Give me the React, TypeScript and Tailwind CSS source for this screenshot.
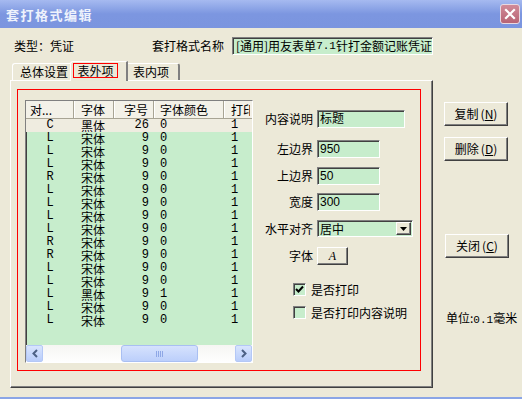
import { ReactNode } from 'react';

const rows: string[][] = [
  ['C', '黑体', '26', '0', '1'],
  ['L', '宋体', '9', '0', '1'],
  ['L', '宋体', '9', '0', '1'],
  ['L', '宋体', '9', '0', '1'],
  ['R', '宋体', '9', '0', '1'],
  ['L', '宋体', '9', '0', '1'],
  ['L', '宋体', '9', '0', '1'],
  ['L', '宋体', '9', '0', '1'],
  ['L', '宋体', '9', '0', '1'],
  ['R', '宋体', '9', '0', '1'],
  ['R', '宋体', '9', '0', '1'],
  ['L', '宋体', '9', '0', '1'],
  ['L', '宋体', '9', '0', '1'],
  ['L', '黑体', '9', '1', '1'],
  ['L', '宋体', '9', '0', '1'],
  ['L', '宋体', '9', '0', '1'],
];

const sunken =
  'border border-t-[#808080] border-l-[#808080] border-r-white border-b-white shadow-[inset_1px_1px_0_#404040]';
const raised =
  'border border-t-white border-l-white border-r-[#404040] border-b-[#404040] shadow-[inset_-1px_-1px_0_#808080]';

function Field({ label, width, value }: { label: string; width: string; value: string }) {
  return (
    <div className="flex items-center">
      <span className="w-[53px] text-right">{label}</span>
      <div
        className={`ml-[4px] h-[18px] ${width} ${sunken} bg-[#c7edcc] flex items-center pl-[2px] font-['Liberation_Sans','Noto_Sans_CJK_SC',sans-serif] text-[12px] leading-none`}
      >
        {value}
      </div>
    </div>
  );
}

function SideButton({ children, className = '' }: { children: ReactNode; className?: string }) {
  return (
    <div
      className={`w-[64px] h-[24px] ${raised} flex items-center justify-center ${className}`}
    >
      {children}
    </div>
  );
}

function Arrow({ dir }: { dir: 'left' | 'right' }) {
  return (
    <div className="w-[17px] h-[17px] rounded-[2px] border border-[#b4c8f6] bg-gradient-to-b from-[#d9e5fd] to-[#b9cdfb] flex items-center justify-center">
      <svg width="8" height="9" viewBox="0 0 8 9">
        <path
          d={dir === 'left' ? 'M6 1 L2.5 4.5 L6 8' : 'M2 1 L5.5 4.5 L2 8'}
          stroke="#4d6185"
          strokeWidth="2"
          fill="none"
        />
      </svg>
    </div>
  );
}

export default function App() {
  return (
    <div className="w-[522px] h-[399px] flex flex-col overflow-hidden bg-[#ece9d8] text-[12px] leading-none text-black font-['Noto_Sans_CJK_SC',sans-serif]">
      {/* title bar */}
      <div className="h-[28px] shrink-0 flex items-center justify-between pl-[6px] pr-[2px] bg-gradient-to-b from-[#a6baf0] via-[#7c96e0] to-[#7b95df]">
        <span className="text-[13px] font-bold text-[#eef2fc] tracking-[1.5px]">套打格式编辑</span>
        <div className="w-[20px] h-[20px] rounded-[3px] border border-[#e8d8e0] bg-gradient-to-b from-[#d08a98] to-[#b86474] flex items-center justify-center">
          <svg width="12" height="12" viewBox="0 0 12 12">
            <path d="M2 2 L10 10 M10 2 L2 10" stroke="white" strokeWidth="2.2" strokeLinecap="square" />
          </svg>
        </div>
      </div>

      {/* type / name row */}
      <div className="mt-[9px] h-[18px] flex items-center">
        <span className="ml-[14px] w-[138px]">类型：凭证</span>
        <span className="w-[80px]">套打格式名称</span>
        <div className={`w-[201px] h-[18px] ${sunken} bg-[#c7edcc] flex items-center pl-[3px] overflow-hidden whitespace-nowrap`}>
          [通用]用友表单<span className="font-['Liberation_Mono',monospace] text-[11px]">7.1</span>针打金额记账凭证
        </div>
      </div>

      {/* main area */}
      <div className="mt-[6px] flex">
        <div className="ml-[10px] w-[423px] flex flex-col">
          {/* tabs */}
          <div className="h-[19px] flex items-end pl-[2px]">
            <div className="h-[17px] w-[60px] border-t border-l border-t-white border-l-white border-r-2 border-r-[#808080] rounded-tl-[3px] flex items-center pl-[7px]">
              总体设置
            </div>
            <div className="relative z-10 -ml-[2px] -mb-[1px] h-[20px] w-[58px] bg-[#ece9d8] border-t border-l border-t-white border-l-white border-r-2 border-r-[#808080] rounded-tl-[3px] pt-[1px] pl-[2px]">
              <div className="w-[45px] h-[15px] border border-[#ff0000] flex items-center justify-center">
                表外项
              </div>
            </div>
            <div className="h-[17px] w-[52px] border-t border-t-white border-r-2 border-r-[#808080] rounded-tr-[3px] flex items-center pl-[5px]">
              表内项
            </div>
          </div>

          {/* panel */}
          <div className="h-[308px] border border-t-white border-l-white border-r-[#404040] border-b-[#404040] shadow-[inset_-1px_-1px_0_#808080] pl-[6px] pt-[8px]">
            <div className="w-[404px] h-[282px] border border-[#ff0000] flex items-start pl-[7px] pt-[10px]">
              {/* list view */}
              <div className={`w-[228px] h-[263px] ${sunken} bg-[#c7edcc] flex flex-col overflow-hidden`}>
                <div className="h-[18px] shrink-0 flex bg-[#f3f1e8] border-b border-b-[#a8a494] whitespace-nowrap overflow-hidden">
                  <div className="w-[48px] shrink-0 border-r border-r-[#a8a494] flex items-center pl-[4px]">对...</div>
                  <div className="w-[40px] shrink-0 border-r border-r-[#a8a494] border-l border-l-white flex items-center pl-[6px]">字体</div>
                  <div className="w-[40px] shrink-0 border-r border-r-[#a8a494] border-l border-l-white flex items-center justify-end pr-[5px]">字号</div>
                  <div className="w-[70px] shrink-0 border-r border-r-[#a8a494] border-l border-l-white flex items-center pl-[5px]">字体颜色</div>
                  <div className="w-[26px] shrink-0 border-l border-l-white flex items-center pl-[6px] overflow-hidden">打印</div>
                </div>
                <div className="flex-1 flex flex-col font-['Liberation_Mono','Noto_Sans_CJK_SC',monospace] text-[12px] leading-[13px]">
                  {rows.map((r, i) => (
                    <div
                      key={i}
                      className={`h-[13px] flex items-center whitespace-nowrap overflow-hidden ${i === 0 ? 'bg-[#efece0]' : ''}`}
                    >
                      <div className="w-[48px] shrink-0 text-center">{r[0]}</div>
                      <div className="w-[40px] shrink-0 pl-[7px] font-['Noto_Sans_CJK_SC',sans-serif] text-[12px] leading-[12px]">{r[1]}</div>
                      <div className="w-[40px] shrink-0 text-right pr-[5px]">{r[2]}</div>
                      <div className="w-[70px] shrink-0 pl-[6px]">{r[3]}</div>
                      <div className="w-[26px] shrink-0 pl-[7px]">{r[4]}</div>
                    </div>
                  ))}
                </div>
                {/* horizontal scrollbar */}
                <div className="h-[17px] shrink-0 flex items-center bg-gradient-to-b from-[#f6f6f3] to-[#fefefe]">
                  <Arrow dir="left" />
                  <div className="flex-1 relative h-[17px]">
                    <div className="absolute left-[78px] top-0 w-[77px] h-[17px] rounded-[3px] border border-[#a9bff2] bg-gradient-to-b from-[#d6e2fd] to-[#bccffb] flex items-center justify-center gap-[1px]">
                      {[0, 1, 2, 3].map((k) => (
                        <div key={k} className="w-[1px] h-[6px] bg-[#8ea7e6]" />
                      ))}
                    </div>
                  </div>
                  <Arrow dir="right" />
                </div>
              </div>

              {/* form */}
              <div className="ml-[7px] mt-[10px] flex flex-col">
                <Field label="内容说明" width="w-[88px]" value="标题" />
                <div className="mt-[12px]">
                  <Field label="左边界" width="w-[63px]" value="950" />
                </div>
                <div className="mt-[9px]">
                  <Field label="上边界" width="w-[63px]" value="50" />
                </div>
                <div className="mt-[8px]">
                  <Field label="宽度" width="w-[63px]" value="300" />
                </div>
                <div className="mt-[9px] flex items-center">
                  <span className="w-[53px] text-right">水平对齐</span>
                  <div className={`ml-[4px] h-[17px] w-[96px] ${sunken} bg-[#c7edcc] flex items-center`}>
                    <span className="flex-1 pl-[2px]">居中</span>
                    <div className={`w-[15px] h-[13px] ${raised} bg-[#ece9d8] flex items-center justify-center mr-[1px]`}>
                      <svg width="7" height="4" viewBox="0 0 7 4">
                        <path d="M0 0 H7 L3.5 4 Z" fill="black" />
                      </svg>
                    </div>
                  </div>
                </div>
                <div className="mt-[10px] flex items-center">
                  <span className="w-[53px] text-right">字体</span>
                  <div className={`ml-[4px] w-[31px] h-[18px] ${raised} flex items-center justify-center`}>
                    <span className="italic font-['Liberation_Serif',serif] text-[12px]">A</span>
                  </div>
                </div>
                <div className="mt-[18px] ml-[33px] flex items-center">
                  <div className={`w-[13px] h-[13px] ${sunken} bg-[#c7edcc] flex items-center justify-center`}>
                    <svg width="9" height="9" viewBox="0 0 9 9">
                      <path d="M1 4 L3.5 6.5 L8 1.5" stroke="black" strokeWidth="2" fill="none" />
                    </svg>
                  </div>
                  <span className="ml-[5px]">是否打印</span>
                </div>
                <div className="mt-[10px] ml-[33px] flex items-center">
                  <div className={`w-[13px] h-[13px] ${sunken} bg-[#c7edcc]`} />
                  <span className="ml-[5px]">是否打印内容说明</span>
                </div>
              </div>
            </div>
          </div>
        </div>

        {/* right buttons */}
        <div className="ml-[11px] flex flex-col">
          <SideButton className="mt-[41px] gap-[2px]">
            复制<span>(<span className="underline">N</span>)</span>
          </SideButton>
          <SideButton className="mt-[11px] gap-[2px]">
            删除<span>(<span className="underline">D</span>)</span>
          </SideButton>
          <SideButton className="mt-[73px] ml-[1px] gap-[2px]">
            关闭<span>(<span className="underline">C</span>)</span>
          </SideButton>
          <div className="mt-[54px] ml-[2px] h-[12px] whitespace-nowrap">
            单位:<span className="font-['Liberation_Mono',monospace] text-[11px]">0.1</span>毫米
          </div>
        </div>
      </div>

      <div className="mt-auto h-[2px] bg-[#8aa5e6]" />
    </div>
  );
}
